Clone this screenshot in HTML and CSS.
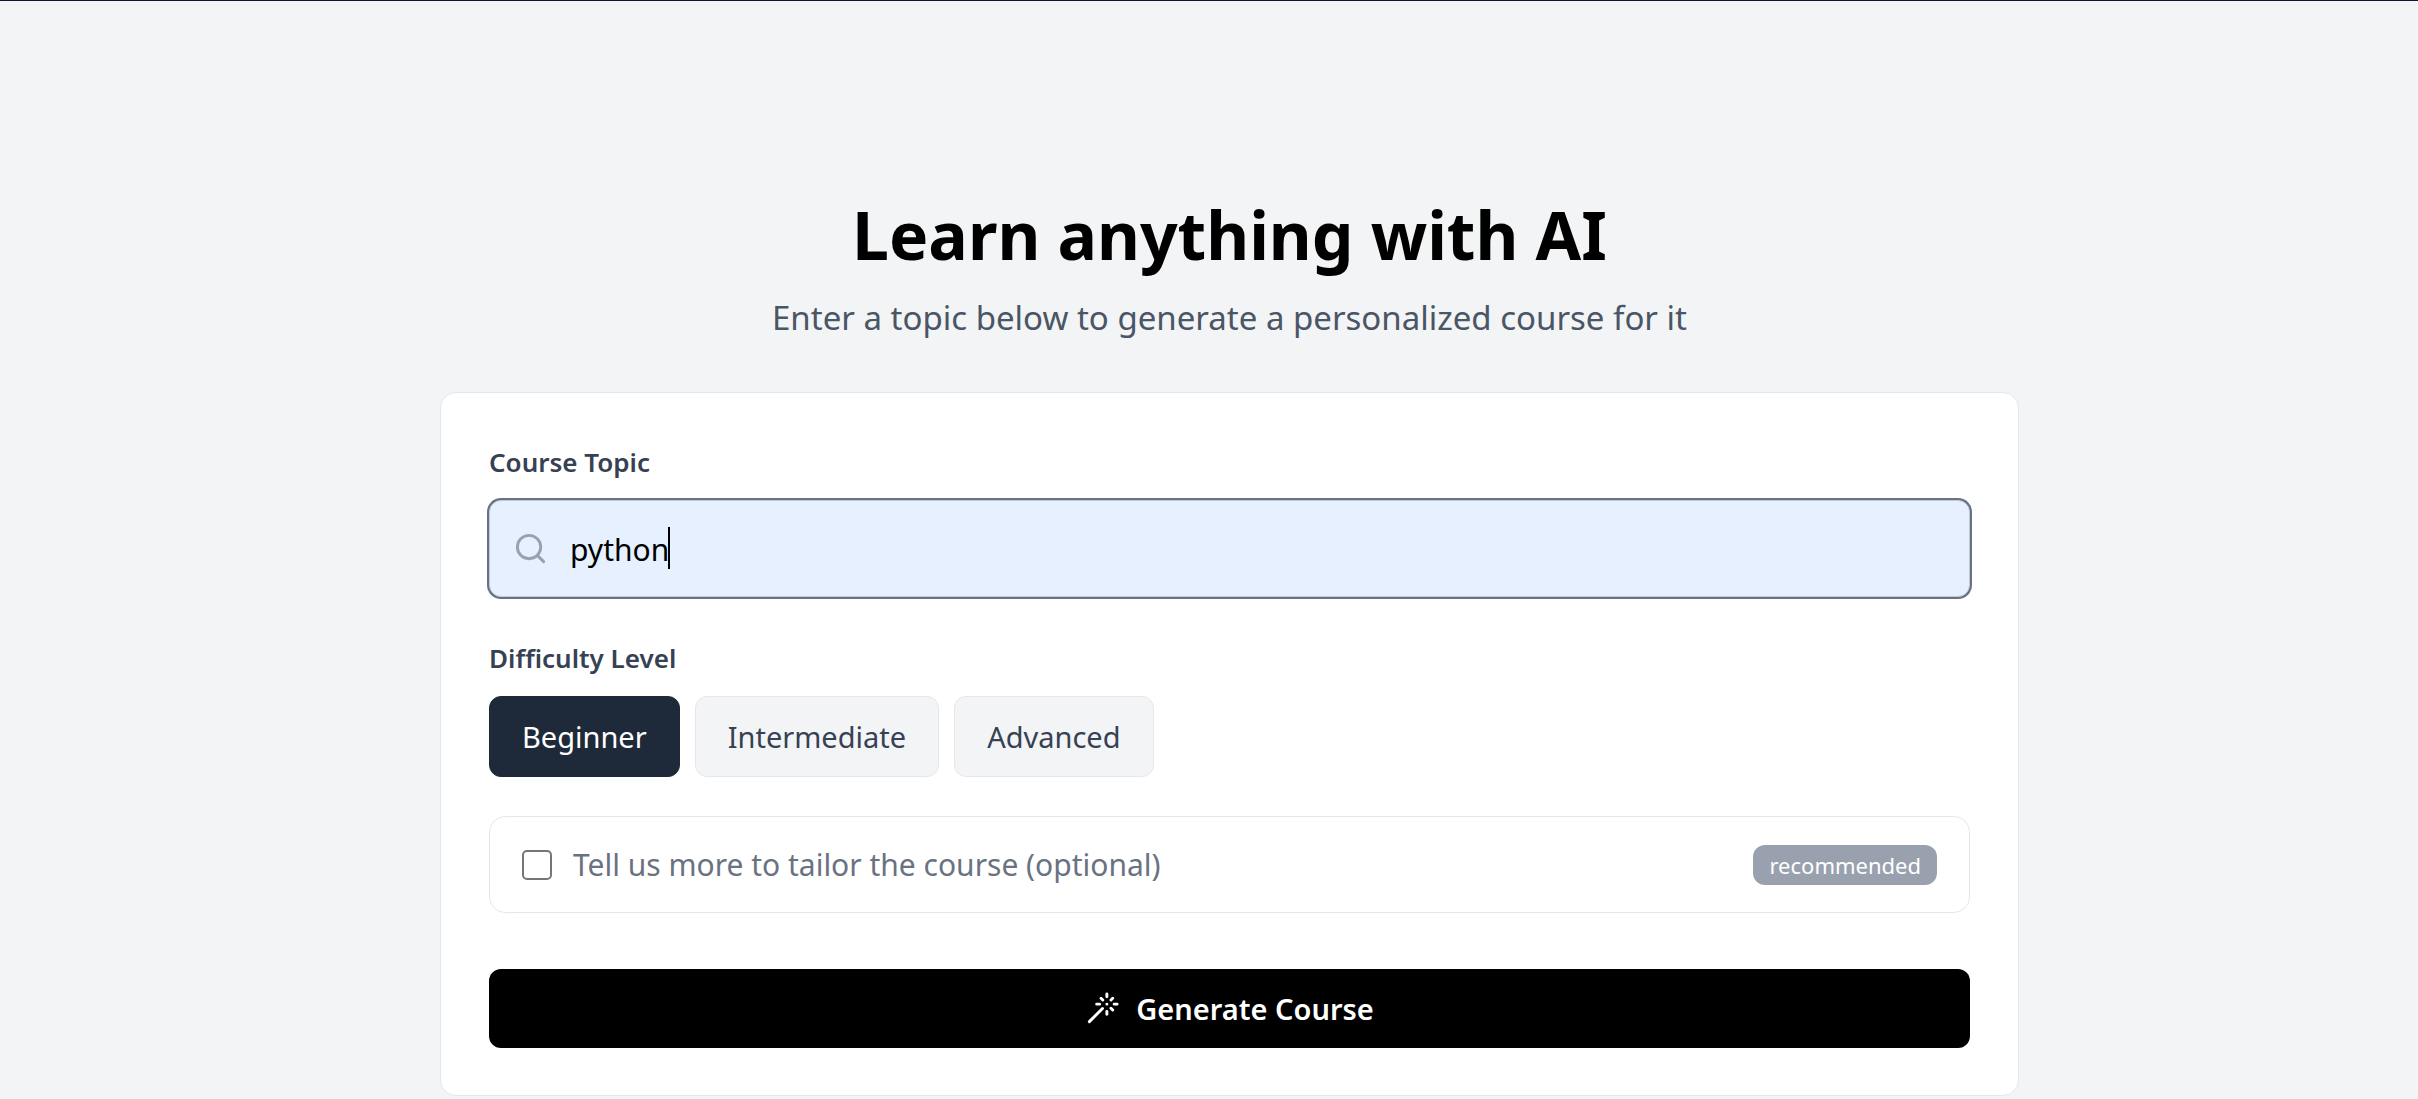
FILE: index.html
```html
<!DOCTYPE html>
<html lang="en">
<head>
  <meta charset="utf-8">
  <meta name="viewport" content="width=device-width, initial-scale=1">
  <title>Learn anything with AI</title>
  <link rel="stylesheet" href="styles.css">
</head>
<body>
  <main class="page">
    <header class="hero">
      <h1 class="hero-title">Learn anything with AI</h1>
      <p class="hero-subtitle">Enter a topic below to generate a personalized course for it</p>
    </header>
    <form class="card">
      <label class="label" for="topic">Course Topic</label>
      <div class="topic">
        <input class="topic-input" id="topic" type="text" value="python" autocomplete="off">
        <svg class="icon topic-icon" viewBox="0 0 24 24" aria-hidden="true"><circle cx="11" cy="11" r="8"/><path d="m21 21-4.300-4.300"/></svg>
        <span class="caret"></span>
      </div>
      <fieldset class="levels">
        <legend class="label">Difficulty Level</legend>
        <div class="level-row">
          <button class="level level-active" type="button" aria-pressed="true">Beginner</button>
          <button class="level" type="button" aria-pressed="false">Intermediate</button>
          <button class="level" type="button" aria-pressed="false">Advanced</button>
        </div>
      </fieldset>
      <label class="tailor" for="tailor">
        <input class="tailor-check" id="tailor" type="checkbox">
        <span class="tailor-text">Tell us more to tailor the course (optional)</span>
        <span class="badge">recommended</span>
      </label>
      <button class="submit" type="submit">
        <svg class="icon" viewBox="0 0 24 24" aria-hidden="true"><path d="M15 4V2M15 16v-2M8 9h2M20 9h2M17.800 11.800 19 13M15 9h.01M17.800 6.200 19 5M3 21l9-9M12.200 6.200 11 5"/></svg>
        <span>Generate Course</span>
      </button>
    </form>
  </main>
</body>
</html>
```
FILE: styles.css
```css
* {
  box-sizing: border-box;
}

body {
  margin: 0;
  min-height: 100vh;
  border-top: 1px solid #10142d;
  background: #f3f4f6;
  color: #000;
  font-family: "Noto Sans", "Open Sans", sans-serif;
}

button,
input {
  font-family: inherit;
}

.page {
  max-width: 1620px;
  margin: 0 auto;
  padding: 191px 0 2px 41px;
}

.hero {
  margin-bottom: 46px;
  text-align: center;
}

.hero-title {
  margin: 0 0 14px;
  font-size: 66px;
  font-weight: 700;
  line-height: 84px;
}

.hero-subtitle {
  margin: 0;
  color: #4a5565;
  font-size: 33px;
  line-height: 56px;
}

.card {
  display: flex;
  flex-direction: column;
  padding: 47px 48px;
  border: 1px solid #e5e7eb;
  border-radius: 16px;
  background: #fff;
}

.label {
  display: block;
  margin: 0 0 16px;
  padding: 0;
  color: #364153;
  font-size: 26px;
  font-weight: 600;
  line-height: 44px;
}

.topic {
  position: relative;
}

.topic-input {
  display: block;
  width: 100%;
  height: 97px;
  padding: 2px 24px 0 80px;
  border: 1px solid #bccadb;
  border-radius: 12px;
  outline: none;
  background: #e6f0ff;
  box-shadow: 0 0 0 2px #6a7282;
  color: #000;
  font-size: 30px;
}

.icon {
  flex: none;
  width: 35px;
  height: 35px;
  fill: none;
  stroke: currentColor;
  stroke-width: 2;
  stroke-linecap: round;
  stroke-linejoin: round;
}

.topic-icon {
  position: absolute;
  top: 31px;
  left: 24px;
  color: #99a1af;
}

.caret {
  position: absolute;
  top: 27px;
  left: 179px;
  width: 2px;
  height: 42px;
  background: #000;
}

.levels {
  margin: 39px 0;
  padding: 0;
  border: 0;
}

.level-row {
  display: flex;
  flex-wrap: wrap;
  gap: 15px;
}

.level {
  height: 81px;
  padding: 0 32px;
  border: 1px solid #e5e7eb;
  border-radius: 12px;
  background: #f3f4f6;
  color: #364153;
  font-size: 29px;
}

.level-active {
  border-color: #1e2939;
  background: #1e2939;
  color: #fff;
}

.tailor {
  display: flex;
  align-items: center;
  gap: 21px;
  min-height: 97px;
  padding: 0 32px;
  border: 1px solid #e5e7eb;
  border-radius: 16px;
}

.tailor-check {
  flex: none;
  appearance: none;
  width: 30px;
  height: 30px;
  margin: 0;
  border: 2px solid #767676;
  border-radius: 5px;
  background: #fff;
}

.tailor-check:checked {
  background: #1e2939;
}

.tailor-text {
  flex: 1;
  color: #6a7282;
  font-size: 30px;
}

.badge {
  padding: 0 16px;
  border-radius: 12px;
  background: #99a1af;
  color: #fff;
  font-size: 22px;
  line-height: 40px;
}

.submit {
  display: flex;
  align-items: center;
  justify-content: center;
  gap: 16px;
  height: 79px;
  margin-top: 56px;
  border: 0;
  border-radius: 12px;
  background: #000;
  color: #fff;
  font-size: 29px;
  font-weight: 600;
}
```
